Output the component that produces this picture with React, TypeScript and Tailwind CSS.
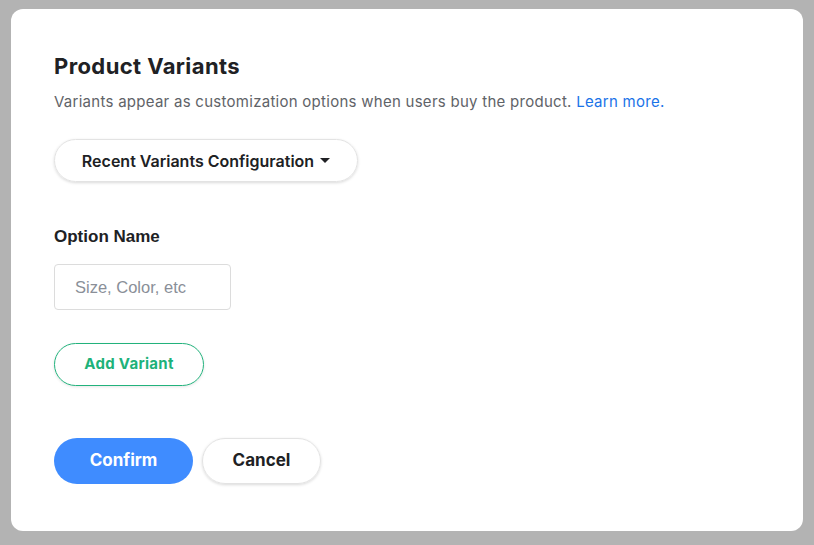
export default function App() {
  return (
    <div className="w-[814px] h-[545px] bg-[#b3b3b3] pt-[9px] pl-[11px] font-['Inter','Open_Sans',sans-serif]">
      <div className="w-[792px] h-[522px] bg-white rounded-[12px] pl-[43px] pt-[46px] flex flex-col items-start">
        <h1 className="text-[22px] leading-[22px] font-bold text-[#202124] tracking-[0.4px]">Product Variants</h1>
        <p className="mt-[15px] text-[15px] leading-[20px] text-[#5f6368] tracking-[0.27px]">
          Variants appear as customization options when users buy the product.{" "}
          <span className="text-[#1a73e8]">Learn more.</span>
        </p>
        <button className="mt-[27px] h-[43px] w-[304px] rounded-full border border-[#e3e3e3] shadow-[0_1px_3px_rgba(0,0,0,0.15)] flex items-center justify-center gap-[6px] text-[16px] font-semibold text-[#202124] font-['Inter',sans-serif]">
          Recent Variants Configuration
          <svg width="10" height="6" viewBox="0 0 10 6"><path d="M0 0h10L5 5z" fill="#202124" /></svg>
        </button>
        <div className="mt-[45px] text-[17px] leading-[20px] font-bold text-[#202124] font-['Liberation_Sans',Arial,sans-serif]">
          Option Name
        </div>
        <input
          placeholder="Size, Color, etc"
          className="mt-[17px] block w-[177px] h-[46px] rounded-[4px] border border-[#dcdcdc] px-[20px] text-[16.5px] placeholder:text-[#8a8f98] outline-none font-['Liberation_Sans',Arial,sans-serif]"
        />
        <button className="mt-[33px] h-[43px] w-[150px] rounded-full border border-[#22b27c] text-[#1db27a] text-[15px] tracking-[0.3px] font-bold shadow-[0_1px_3px_rgba(0,0,0,0.1)] font-['Inter',sans-serif]">
          Add Variant
        </button>
        <div className="mt-[52px] flex gap-[9px]">
          <button className="h-[46px] w-[139px] rounded-full bg-[#3f8cff] text-white text-[17px] font-bold font-['Inter',sans-serif]">
            Confirm
          </button>
          <button className="h-[46px] w-[119px] rounded-full border border-[#e3e3e3] shadow-[0_1px_3px_rgba(0,0,0,0.15)] text-[#202124] text-[17px] font-bold font-['Inter',sans-serif]">
            Cancel
          </button>
        </div>
      </div>
    </div>
  );
}
